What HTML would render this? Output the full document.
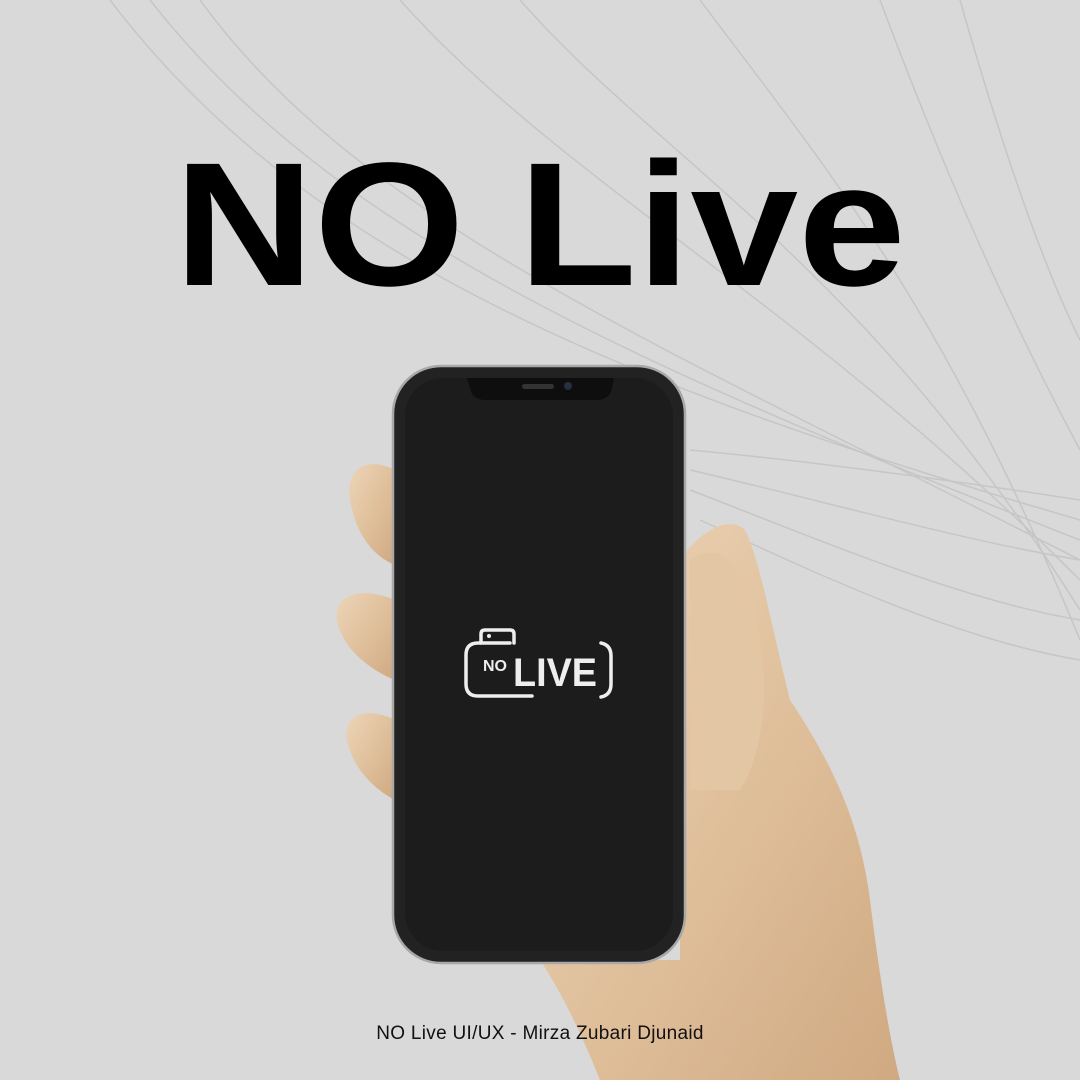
<!DOCTYPE html>
<html><head><meta charset="utf-8"><style>
html,body{margin:0;padding:0}
body{width:1080px;height:1080px;background:#d9d9d9;position:relative;overflow:hidden;font-family:"Liberation Sans",sans-serif}
.title{position:absolute;left:0;width:1080px;top:137px;text-align:center;font-size:176px;font-weight:bold;color:#000;letter-spacing:0;line-height:1;transform:scaleX(1.1);transform-origin:540px 0}
.cap{position:absolute;left:0;width:1080px;top:1023px;text-align:center;font-size:19px;color:#111;letter-spacing:0.3px}
</style></head><body>
<svg width="1080" height="1080" style="position:absolute;left:0;top:0">
<defs>
<linearGradient id="wood" x1="0" y1="0" x2="1" y2="1">
<stop offset="0" stop-color="#ecd5b8"/><stop offset="0.5" stop-color="#e0c09c"/><stop offset="1" stop-color="#cfa981"/>
</linearGradient>
</defs>
<g fill="none" stroke="#c4c4c4" stroke-width="1.5" opacity="0.9">
<path d="M110 0 C300 250 600 380 1080 520"/>
<path d="M150 0 C330 230 620 360 1080 540"/>
<path d="M200 0 C360 220 650 340 1080 560"/>
<path d="M400 0 C560 180 800 300 1080 580"/>
<path d="M520 0 C660 160 860 260 1080 610"/>
<path d="M700 0 C820 160 940 300 1080 640"/>
<path d="M880 0 C940 160 1000 300 1080 450"/>
<path d="M960 0 C1000 140 1040 260 1080 340"/>
<path d="M690 450 C800 460 950 480 1080 500"/>
<path d="M690 470 C820 500 960 540 1080 560"/>
<path d="M690 490 C820 540 960 600 1080 620"/>
<path d="M700 520 C830 580 960 640 1080 660"/>
</g>
<path d="M680 560 C700 530 730 515 745 530 C760 560 770 620 790 700 C830 760 860 820 870 900 C880 980 890 1040 900 1080 L600 1080 C580 1030 560 990 540 960 L680 960 Z" fill="url(#wood)"/>
<path d="M690 560 C720 540 745 560 760 640 C770 700 760 760 740 790 L690 790 Z" fill="#e3c7a4"/>
<path d="M395 470 C365 455 345 470 350 500 C355 530 370 555 395 565 Z" fill="url(#wood)"/>
<path d="M395 600 C360 585 330 595 338 625 C345 650 370 670 395 680 Z" fill="url(#wood)"/>
<path d="M395 720 C365 705 340 715 348 745 C355 770 375 790 395 800 Z" fill="url(#wood)"/>
<rect x="393" y="366" width="292" height="597" rx="48" fill="#222" stroke="#a8a8a8" stroke-width="2.5"/>
<rect x="405" y="378" width="268" height="573" rx="38" fill="#1c1c1c"/>
<path d="M467 378 L470 388 Q472 400 486 400 L596 400 Q610 400 612 388 L614 378 Z" fill="#0e0e0e"/>
<rect x="522" y="384" width="32" height="5" rx="2.5" fill="#333"/>
<circle cx="568" cy="386" r="4" fill="#253040"/>
<g fill="none" stroke="#eee" stroke-width="3.5" stroke-linecap="round">
<path d="M510 643 L478 643 Q466 643 466 655 L466 684 Q466 696 478 696 L532 696"/>
<path d="M481 643 L481 634 Q481 630 485 630 L510 630 Q514 630 514 634 L514 643"/>
<path d="M601 643 Q611 645 611 656 L611 684 Q611 695 601 697"/>
</g>
<circle cx="489" cy="636" r="2" fill="#eee"/>
<text x="483" y="671" fill="#eee" font-family="Liberation Sans" font-weight="bold" font-size="16">NO</text>
<text x="513" y="686" fill="#eee" font-family="Liberation Sans" font-weight="bold" font-size="40" textLength="84" lengthAdjust="spacingAndGlyphs">LIVE</text>
</svg>
<div class="title">NO Live</div>
<div class="cap">NO Live UI/UX - Mirza Zubari Djunaid</div>
</body></html>
